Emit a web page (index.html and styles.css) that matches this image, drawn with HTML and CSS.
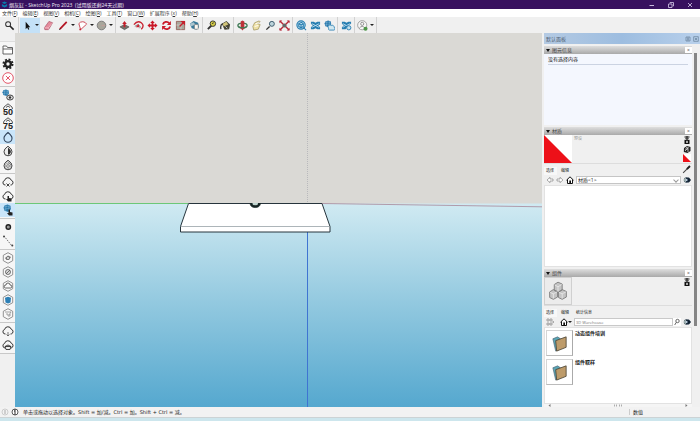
FILE: index.html
```html
<!DOCTYPE html>
<html lang="zh-CN">
<head>
<meta charset="utf-8">
<title>烟灰缸 - SketchUp Pro 2023</title>
<link rel="stylesheet" href="styles.css">
</head>
<body>
<svg class="defs" aria-hidden="true">
  <symbol id="hex" viewBox="0 0 12 12"><path d="M6 .7 10.7 3.3v5.4L6 11.3 1.3 8.700V3.300Z" fill="#f8f8f8" stroke="#777" stroke-width=".8"/></symbol>
  <symbol id="cloud" viewBox="0 0 12 12"><path d="M3.500 9H3A2.300 2.300 0 0 1 2.600 4.500 3.400 3.400 0 0 1 9.200 4.200 2.500 2.500 0 0 1 9.200 9H8.500" fill="none" stroke="#333" stroke-width="1"/></symbol>
  <symbol id="home" viewBox="0 0 8 8"><path d="M.5 4.200 4 .8 7.500 4.200M1.500 3.500V7.500H6.500V3.500" fill="#fff" stroke="#111" stroke-width="1"/><path d="M3.300 4.500H5V7.500H3.300Z" fill="#111"/></symbol>
  <symbol id="detail" viewBox="0 0 8 8"><circle cx="3.700" cy="4" r="2.800" fill="#234"/><path d="M.8 3 3 1.500V6.500L.8 5Z" fill="#9aa"/><path d="M4 2.500H5.500V1L8 4 5.500 7V5.500H4Z" fill="#123"/><circle cx="3.600" cy="4" r="1" fill="#cde"/></symbol>
  <symbol id="pin" viewBox="0 0 8 8"><path d="M1.500 1H6.500M4 0V3.500M2.500 2 4 3.500 5.500 2" stroke="#111" stroke-width="1" fill="none"/><path d="M1.500 3.800H6.500V8H1.500Z" fill="#111"/><path d="M4 4.700V7M3 6H5" stroke="#fff" stroke-width=".8"/></symbol>
  <symbol id="folder" viewBox="0 0 20 20"><path d="M3 5 8 3 11 5 10 16 6 18Z" fill="#5aa6b5" stroke="#456" stroke-width=".6"/><path d="M6 7 17 3V14L7 18Z" fill="#bd9b6a" stroke="#4d4637" stroke-width=".9"/></symbol>
  <symbol id="globe" viewBox="0 0 12 12"><path d="M2 2 6 .8 10 2.300 10.500 7 7 10.500 2 9 .8 5Z" fill="#2878ad"/><path d="M1.500 4 6 3 10 4.500M1.500 7 6 6 10 7M4 1.500 3.500 9.500M8 1.500 7.500 10" stroke="#9fcbe2" stroke-width=".5" fill="none"/></symbol>
</svg>

<header class="titlebar">
  <svg class="logo" viewBox="0 0 8 8"><path d="M1 2 4 .5 7 2 4 3.500ZM1 3.500 4 5 7 3.500V6L4 7.500 1 6Z" fill="#087aae"/></svg>
  <h1>烟灰缸 - SketchUp Pro 2023 &nbsp;(试用版还剩24天过期)</h1>
  <div class="wincontrols">
    <button aria-label="最小化"><svg viewBox="0 0 8 8"><path d="M1.500 4.500H6" stroke="#c7b9dc"/></svg></button>
    <button aria-label="还原"><svg viewBox="0 0 8 8"><path d="M1.500 3H5V6.500H1.500ZM3 2.500V1.500H6.500V5H5.500" fill="none" stroke="#c7b9dc" stroke-width=".9"/></svg></button>
    <button aria-label="关闭"><svg viewBox="0 0 8 8"><path d="M2 2 6 6M6 2 2 6" stroke="#c7b9dc" stroke-width=".9"/></svg></button>
  </div>
</header>

<nav class="menubar">
  <button>文件(<u>F</u>)</button><button>编辑(<u>E</u>)</button><button>视图(<u>V</u>)</button><button>相机(<u>C</u>)</button><button>绘图(<u>R</u>)</button><button>工具(<u>T</u>)</button><button>窗口(<u>W</u>)</button><button>扩展程序 (<u>x</u>)</button><button>帮助(<u>H</u>)</button>
</nav>

<div class="toolbar">
  <div class="set first">
    <button aria-label="搜索"><svg viewBox="0 0 12 12"><circle cx="4.500" cy="4.500" r="2.700" fill="#eee" stroke="#333" stroke-width="1.100"/><path d="M6.500 6.500 10.500 10.500" stroke="#222" stroke-width="1.700"/></svg></button>
  </div>
  <div class="set draw">
    <button class="drop on" aria-label="选择"><svg viewBox="0 0 12 12"><path d="M4 2V10L5.700 8.300 6.800 10.700 8 10.100 6.900 7.800H9Z" fill="#111"/></svg><i></i></button>
    <button class="eraser" aria-label="橡皮擦"><svg viewBox="0 0 12 12"><path d="M1.500 8.500 6.500 1.500 10.500 3 6 10.500 2 10.500Z" fill="#e58b9b" stroke="#a24d60" stroke-width=".7"/><path d="M1.500 8.500 5.800 8.500 10.500 3M5.800 8.500V10.500" fill="none" stroke="#fbd1d9" stroke-width=".6"/></svg></button>
    <button class="drop" aria-label="直线"><svg viewBox="0 0 12 12"><path d="M2 10 9.500 2" stroke="#b51624" stroke-width="1.900"/><path d="M1.300 10.700 2.800 9.200" stroke="#222"/></svg><i></i></button>
    <button class="drop" aria-label="圆弧"><svg viewBox="0 0 12 12"><path d="M2 4A5 5 0 0 1 10.500 4.500L4 10.500Z" fill="#fff" stroke="#cb4150"/><circle cx="3.500" cy="10.300" r="1" fill="#c23"/></svg><i></i></button>
    <button class="drop" aria-label="圆"><svg viewBox="0 0 12 12"><circle cx="6" cy="6" r="4.700" fill="#a8a69c" stroke="#777"/><path d="M6 6H10" stroke="#c99" stroke-width=".7"/></svg><i></i></button>
  </div>
  <div class="set">
    <button aria-label="推/拉"><svg viewBox="0 0 12 12"><path d="M1 7.500 6 5 11 7.500 6 10.500Z" fill="#74756e" stroke="#444" stroke-width=".6"/><path d="M6 1 8.500 4.300H7V8H5V4.300H3.500Z" fill="#c51f2b"/></svg></button>
    <button aria-label="偏移"><svg viewBox="0 0 12 12"><path d="M1 5Q5 0 9 3T9 10" fill="none" stroke="#c92432" stroke-width="1.500"/><path d="M2 7Q5 4 7 6T7 9" fill="none" stroke="#777"/><path d="M3 8 6 4 7 8Z" fill="#c92432"/></svg></button>
    <button aria-label="移动"><svg viewBox="0 0 12 12"><path d="M6 .5 8.500 3.200H7V5H8.800V3.500L11.500 6 8.800 8.500V7H7V8.800H8.500L6 11.500 3.500 8.800H5V7H3.200V8.500L.5 6 3.200 3.500V5H5V3.200H3.500Z" fill="#ca1828"/></svg></button>
    <button aria-label="旋转"><svg viewBox="0 0 12 12"><path d="M2 5A4 4 0 0 1 9 3.500M10 7A4 4 0 0 1 3 8.500" fill="none" stroke="#ca1828" stroke-width="1.900"/><path d="M10.800 1V5.500H6.500ZM1.200 11V6.500H5.500Z" fill="#ca1828"/></svg></button>
    <button aria-label="缩放"><svg viewBox="0 0 12 12"><path d="M1.500 1.500H10.500V10.500H1.500Z" fill="#aaa79c" stroke="#8a4c46" stroke-width=".8"/><path d="M1.500 5.500H6.500V10.500" fill="none" stroke="#ddd" stroke-width=".7"/><path d="M5 7 9 3" stroke="#c51f2b" stroke-width="1.500"/><path d="M6 1H11V6Z" fill="#c51f2b"/></svg></button>
    <button aria-label="路径跟随"><svg viewBox="0 0 12 12"><path d="M1 4 5 1 10 3 11 8 8 10.500 3 9Z" fill="#397999"/><path d="M1 4 5 2.500 7 5 2 7Z" fill="#aac4cf"/><path d="M6 5H10V10H6Z" fill="#faf7f2" stroke="#777" stroke-width=".6"/></svg></button>
  </div>
  <div class="set">
    <button aria-label="卷尺"><svg viewBox="0 0 12 12"><path d="M2 10 6 6" stroke="#333" stroke-width="2"/><circle cx="7.500" cy="4" r="3" fill="#d4cb43" stroke="#333"/><path d="M6.500 4 8.500 3" stroke="#333"/></svg></button>
    <button aria-label="颜料桶"><svg viewBox="0 0 12 12"><path d="M2 4 7 1 11 5 10 10 5 10.500Z" fill="#474536"/><path d="M3 4 7 2 9 5 4 7Z" fill="#d3c67a"/><path d="M1 10Q0 5 3 4" fill="none" stroke="#333" stroke-width="1.400"/><path d="M6 7 8 9" stroke="#ddd"/></svg></button>
  </div>
  <div class="set">
    <button aria-label="环绕观察"><svg viewBox="0 0 12 12"><ellipse cx="6" cy="6" rx="5" ry="2.600" fill="none" stroke="#417a55" stroke-width="1.500"/><path d="M4 1.500 6 .5 8 1.500V9L6 11.500 4 9Z" fill="#bf3038"/><path d="M1.500 7Q6 10 10.500 7" fill="none" stroke="#417a55" stroke-width="1.300"/></svg></button>
    <button aria-label="平移"><svg viewBox="0 0 12 12"><path d="M2 7 4 3 9 1 10 2 7 4 10 5 8 10 3 11Z" fill="#eee0a5" stroke="#a0945f" stroke-width=".8"/><path d="M4 7 8 6M5 4 9 3" stroke="#fff"/></svg></button>
    <button aria-label="缩放视图"><svg viewBox="0 0 12 12"><path d="M1.500 10.500 5 7" stroke="#333" stroke-width="1.500"/><circle cx="7.500" cy="4.200" r="2.700" fill="#bcd3db" stroke="#345366"/></svg></button>
    <button aria-label="充满视窗"><svg viewBox="0 0 12 12"><path d="M1 1 11 11M11 1 1 11" stroke="#b82838" stroke-width="1.500"/><circle cx="6" cy="6" r="2.200" fill="#666"/><path d="M.5.5H3.500L.5 3.500ZM11.500.5V3.500L8.500 .5ZM.5 11.500V8.500L3.500 11.500ZM11.500 11.500H8.500L11.500 8.500Z" fill="#b82838"/></svg></button>
  </div>
  <div class="set">
    <button aria-label="3D Warehouse"><svg viewBox="0 0 12 12"><circle cx="5.500" cy="5.500" r="4.500" fill="#c7e3ef" stroke="#287eb1" stroke-width="1.300"/><path d="M3 4 6 2.500 8 4V7L5.500 8.500 3 7ZM3 4 5.500 5.500 8 4M5.500 5.500V8.500M8 8 11 11" fill="none" stroke="#287eb1" stroke-width="1.100"/></svg></button>
    <button aria-label="分享模型"><svg viewBox="0 0 12 12"><path d="M1 2H4L6 3 8 2H11V5L9 6 11 8V10H8L6 9 4 10H1V8L3 6 1 4Z" fill="#287eb1"/><path d="M2 4 6 6 10 4M2 8 6 6 10 8" fill="none" stroke="#d8f0fb" stroke-width=".8"/></svg></button>
    <button aria-label="分享组件"><svg viewBox="0 0 12 12"><use href="#globe" width="9" height="9"/><path d="M5 9A2 2 0 0 1 8 6 2 2 0 0 1 11 8 1.500 1.500 0 0 1 10 11H6A1.500 1.500 0 0 1 5 9" fill="#d0e7f0" stroke="#287eb1" stroke-width=".9"/></svg></button>
  </div>
  <div class="set">
    <button aria-label="扩展程序"><svg viewBox="0 0 12 12"><path d="M1 2H4L6 3 8 2H11V4L8 6 5 10H1V8L3 6 1 4Z" fill="#287eb1"/><path d="M2 4 6 6 10 4M2 8 5 6" fill="none" stroke="#d8f0fb" stroke-width=".8"/><circle cx="8.500" cy="8.500" r="2.300" fill="#c5e1ed" stroke="#287eb1"/></svg></button>
  </div>
  <div class="set">
    <button class="drop" aria-label="账户"><svg viewBox="0 0 12 12"><circle cx="5.700" cy="5.700" r="5" fill="#f6f6f6" stroke="#888" stroke-width=".8"/><circle cx="5.700" cy="4.200" r="1.700" fill="none" stroke="#777" stroke-width=".8"/><path d="M2.500 9Q5.500 5 9 9" fill="none" stroke="#777" stroke-width=".8"/><circle cx="9.300" cy="9.500" r="2.200" fill="#4d9647"/></svg><i></i></button>
  </div>
</div>

<main class="workspace">
  <aside class="sidebar">
    <div class="grip"></div>
    <div class="group">
      <button aria-label="打开"><svg viewBox="0 0 12 12"><path d="M1 10V2H4.500L5.500 3.500H10.500V10ZM1 5H11" fill="#fff" stroke="#555" stroke-width=".9"/></svg></button>
      <button aria-label="设置"><svg viewBox="0 0 12 12"><circle cx="6" cy="6" r="4.600" fill="none" stroke="#222" stroke-width="1.800" stroke-dasharray="2 1.610"/><circle cx="6" cy="6" r="2.900" fill="none" stroke="#222" stroke-width="2.400"/></svg></button>
      <button aria-label="关闭图层"><svg viewBox="0 0 12 12"><circle cx="6" cy="6" r="5.300" fill="#fff" stroke="#e04358" stroke-width=".9"/><path d="M3.900 3.900 8.100 8.100M8.100 3.900 3.900 8.100" stroke="#e04358" stroke-width=".9"/></svg></button>
    </div>
    <div class="group">
      <button aria-label="可见性"><svg viewBox="0 0 12 12"><use href="#globe" width="8" height="8"/><ellipse cx="8" cy="8.500" rx="3.300" ry="2.500" fill="#ddd" stroke="#444"/><circle cx="8" cy="8.500" r="1.200" fill="#333"/></svg></button>
      <button aria-label="50%"><svg viewBox="0 0 12 12"><path d="M1.500 6 2 4 6 .8 10 4 10.500 6M4 4.500 6 3 8 4.500" fill="none" stroke="#444" stroke-width=".9"/><text x="6" y="12" class="pct">50</text></svg></button>
      <button aria-label="75%"><svg viewBox="0 0 12 12"><path d="M1.500 6 2 4 6 .8 10 4 10.500 6M4 4.500 6 3 8 4.500" fill="none" stroke="#444" stroke-width=".9"/><text x="6" y="12" class="pct">75</text></svg></button>
      <button class="on" aria-label="透明"><svg viewBox="0 0 12 12"><path d="M6 1.500Q10.200 5 10 7.200A4 4 0 0 1 2 7.200Q1.800 5 6 1.500Z" fill="none" stroke="#31445c" stroke-width="1.100"/></svg></button>
      <button aria-label="半透明"><svg viewBox="0 0 12 12"><path d="M6 1.200Q10.200 4 10 6.800A4 4 0 0 1 2 6.800Q1.800 4 6 1.200Z" fill="#eee" stroke="#333" stroke-width=".9"/><path d="M6 2.500Q9 5 9 7Q8 9.500 6 9.700Z" fill="#333"/></svg></button>
      <button aria-label="纹理"><svg viewBox="0 0 12 12"><path d="M6 1.200Q10.200 4 10 6.800A4 4 0 0 1 2 6.800Q1.800 4 6 1.200Z" fill="#ddd" stroke="#333" stroke-width=".9"/><path d="M2.500 5 7 9.800M4 3.500 9 8.500M5.500 2.500 9.500 6.500M3 8.500 8 3.500M5 9.500 9.500 5" stroke="#666" stroke-width=".6"/></svg></button>
    </div>
    <div class="group">
      <button aria-label="断开云端"><svg viewBox="0 0 12 12"><use href="#cloud"/><path d="M4.500 7.500 7.500 10.500M7.500 7.500 4.500 10.500" stroke="#444"/></svg></button>
      <button aria-label="云端选择"><svg viewBox="0 0 12 12"><use href="#cloud"/><path d="M5.500 6H7V8L9.500 8.500V11.500H6L4 9H5.500Z" fill="#222"/></svg></button>
      <button class="on" aria-label="模型选择"><svg viewBox="0 0 12 12"><use href="#globe" width="9" height="9" x="1"/><path d="M6.500 5.500H8V8L10.500 8.500V11.500H7L5 9H6.500Z" fill="#222"/></svg></button>
    </div>
    <div class="group">
      <button aria-label="点"><svg viewBox="0 0 12 12"><circle cx="6.300" cy="6" r="2.200" fill="#999" stroke="#222" stroke-width="1.400"/></svg></button>
      <button aria-label="构造线"><svg viewBox="0 0 12 12"><path d="M2 1 10 11" stroke="#555" stroke-width=".8" stroke-dasharray="1.500 1"/><circle cx="2" cy="1.500" r="1" fill="#444"/><circle cx="10.300" cy="10.500" r="1" fill="#444"/></svg></button>
    </div>
    <div class="group">
      <button aria-label="视图一"><svg viewBox="0 0 12 12"><use href="#hex"/><path d="M3 6 6 3.500 9 5 7 8 4.500 8Z" fill="#777"/><circle cx="6" cy="6" r="1" fill="#eee"/></svg></button>
      <button aria-label="视图二"><svg viewBox="0 0 12 12"><use href="#hex"/><circle cx="6" cy="6" r="2.500" fill="#ddd" stroke="#555" stroke-width=".8"/><path d="M4 8 8 4" stroke="#555" stroke-width=".8"/></svg></button>
      <button aria-label="云视图"><svg viewBox="0 0 12 12"><use href="#hex"/><path d="M3.500 8A1.500 1.500 0 0 1 4 5 2 2 0 0 1 8 5 1.500 1.500 0 0 1 8.500 8Z" fill="none" stroke="#555" stroke-width=".9"/></svg></button>
      <button aria-label="实体视图"><svg viewBox="0 0 12 12"><use href="#hex"/><path d="M3 3.800 6 2.800 9 3.800 8.500 8.500 6 9.500 3.500 8.500Z" fill="#2d80b6"/></svg></button>
      <button aria-label="线框视图"><svg viewBox="0 0 12 12"><use href="#hex"/><path d="M3 4H9L7 7V9M5 5V7H9" fill="none" stroke="#999" stroke-width=".9"/></svg></button>
    </div>
    <div class="group">
      <button aria-label="云上传"><svg viewBox="0 0 12 12"><use href="#cloud"/><path d="M6 7V11M4.500 9.500 6 11 7.500 9.500" fill="none" stroke="#555" stroke-width=".8"/></svg></button>
      <button aria-label="云同步"><svg viewBox="0 0 12 12"><use href="#cloud"/><path d="M3 7.500H9M4 10.500H8L9 7.500 6 6 3 7.500Z" fill="#eee" stroke="#333" stroke-width=".9"/></svg></button>
    </div>
  </aside>

  <section class="viewport" aria-label="模型视图">
    <svg viewBox="0 0 527 374" preserveAspectRatio="xMidYMid slice">
      <defs>
        <linearGradient id="ground" x1="0" y1="0" x2="0" y2="1"><stop offset="0" stop-color="#d0eaf2"/><stop offset=".5" stop-color="#91c8df"/><stop offset="1" stop-color="#55a8cf"/></linearGradient>
      </defs>
      <rect width="527" height="374" fill="#dad9d5"/>
      <rect y="170.500" width="527" height="203.500" fill="url(#ground)"/>
      <path d="M292.500 0V170" stroke="#aaaab2" stroke-width=".7" stroke-dasharray="1 1"/>
      <path d="M0 170.500H173" stroke="#6cc878"/>
      <path d="M307 170.500 527 173.800" stroke="#a88798" stroke-width=".8"/>
      <path d="M292.500 199V374" stroke="#3f74d2"/>
      <path d="M173.500 170.500H307L315 193.500V199H165.500V193.500Z" fill="#fff" stroke="#26343c" stroke-width="1"/>
      <path d="M166 193.500H315" stroke="#8a959b" stroke-width=".7"/>
      <path d="M235 170.500A5.300 4.700 0 0 0 245.500 170.500H243.500A3.300 2.500 0 0 1 237 170.500Z" fill="#172524" stroke="#172524" stroke-width=".7"/>
      <path d="M237.500 170H243A2.700 2 0 0 1 237.500 170" fill="#bfd5cf"/>
    </svg>
  </section>

  <aside class="tray">
    <div class="trayhead"><h2>默认面板</h2>
      <button aria-label="固定"><svg viewBox="0 0 6 6"><path d="M1 1H5V5H1ZM2 3H4M3 1V5" fill="none" stroke="#667f99" stroke-width=".7"/></svg></button>
      <button aria-label="关闭面板"><svg viewBox="0 0 6 6"><path d="M.7.700H5.300V5.300H.7ZM2 2 4 4M4 2 2 4" fill="none" stroke="#667f99" stroke-width=".7"/></svg></button>
    </div>
    <div class="traybody">
      <div class="panels">
        <section class="panel entity">
          <h3>图元信息<button aria-label="关闭图元信息">×</button></h3>
          <div class="info"><p>没有选择内容</p></div>
        </section>
        <section class="panel">
          <h3>材质<button aria-label="关闭材质">×</button></h3>
          <div class="preview">
            <svg class="swatch" viewBox="0 0 28 28"><path d="M0 0H28V28Z" fill="#fff"/><path d="M0 0 28 28H0Z" fill="#ed1018"/></svg>
            <span class="name">预设</span>
            <div class="side">
              <svg viewBox="0 0 8 8"><use href="#pin"/></svg>
              <svg viewBox="0 0 8 8"><path d="M1 3 4 1 7.500 2V6L4.500 8 .8 7Z" fill="#222"/><path d="M2 4H5V7M3 2.500 6 3M2 6 5 3" stroke="#eee" stroke-width=".7" fill="none"/></svg>
              <svg viewBox="0 0 8 8"><path d="M0 0H8V8Z" fill="#fff"/><path d="M0 0 8 8H0Z" fill="#ed1018"/></svg>
            </div>
          </div>
          <div class="tabs"><button class="active">选择</button><button>编辑</button><svg class="dropper" viewBox="0 0 8 8"><path d="M1 7 5 3" stroke="#444"/><path d="M4.500 3 6.500 1 7 1.500 5 3.500Z" fill="#222" stroke="#222"/></svg></div>
          <div class="controls">
            <button aria-label="后退"><svg viewBox="0 0 8 8"><path d="M1 4 4 1.300V3H7V5H4V6.700Z" fill="#fff" stroke="#888" stroke-width=".7"/></svg></button>
            <button aria-label="前进"><svg viewBox="0 0 8 8"><path d="M7 4 4 1.300V3H1V5H4V6.700Z" fill="#fff" stroke="#888" stroke-width=".7"/></svg></button>
            <button aria-label="模型材质"><svg><use href="#home"/></svg></button>
            <span class="selectbox"><select aria-label="材质集"><option>材质&lt;1&gt;</option></select></span>
            <button aria-label="详细信息"><svg><use href="#detail"/></svg></button>
          </div>
          <div class="list materials"></div>
        </section>
        <section class="panel components">
          <h3>组件<button aria-label="关闭组件">×</button></h3>
          <div class="preview">
            <div class="thumb"><svg viewBox="0 0 28 28"><path d="M10 7 14 4.500 18.500 6.500V13L14 15.500 10 13.500ZM5 15 9 12.500 13.500 14.500V20.500L9 23 5 21ZM14.500 15 18.500 12.500 23 14.500V20.500L18.500 23 14.500 21Z" fill="#c4c4c4" stroke="#808080" stroke-width="1"/><path d="M10.500 7.500 14 9.500 18 7M14 9.500V15M5.500 15.500 9 17 13 15M9 17V22M15 15.500 18.500 17 22.500 15M18.500 17V22" fill="none" stroke="#eee" stroke-width=".8"/></svg></div>
            <div class="side"><svg viewBox="0 0 8 8"><use href="#pin"/></svg></div>
          </div>
          <div class="tabs"><button class="active">选择</button><button>编辑</button><button>统计信息</button></div>
          <div class="controls">
            <button class="view" aria-label="视图选项"><svg viewBox="0 0 8 8"><path d="M1 1H3V3H1ZM4 1H6V3H4ZM1 5H3V7H1ZM4 5H6V7H4Z" fill="none" stroke="#888" stroke-width=".7"/><path d="M6.500 4H8" stroke="#666"/></svg></button>
            <button class="homedrop" aria-label="模型中"><svg><use href="#home"/></svg><i></i></button>
            <input type="search" aria-label="搜索组件" placeholder="3D Warehouse">
            <button class="find" aria-label="搜索"><svg viewBox="0 0 8 8"><circle cx="4.500" cy="3" r="1.700" fill="none" stroke="#444" stroke-width=".8"/><path d="M3.300 4.300 1.700 7" stroke="#444" stroke-width=".8"/></svg></button>
            <button aria-label="组件详细信息"><svg><use href="#detail"/></svg></button>
          </div>
          <ul class="list items">
            <li><span><svg><use href="#folder"/></svg></span><b>动态组件培训</b></li>
            <li><span><svg><use href="#folder"/></svg></span><b>组件取样</b></li>
          </ul>
          <div class="hscroll">
            <svg viewBox="0 0 3 3"><path d="M2.500 0V3L.5 1.500Z" fill="#777"/></svg>
            <svg class="ticks" viewBox="0 0 9 3"><path d="M.5.500V2.500M2.500.500V2.500M5.500.500V2.500M7.500.500V2.500" stroke="#999" stroke-width=".8"/></svg>
            <svg viewBox="0 0 3 3"><path d="M.5 0V3L2.500 1.500Z" fill="#777"/></svg>
          </div>
        </section>
      </div>
      <div class="vscroll"><div></div></div>
    </div>
  </aside>
</main>

<footer class="status">
  <svg viewBox="0 0 8 8"><circle cx="4" cy="4" r="3" fill="none" stroke="#bbb" stroke-width=".7"/><path d="M4 2V6" stroke="#aaa"/></svg>
  <svg viewBox="0 0 8 8"><circle cx="4" cy="4" r="3" fill="#fff" stroke="#333" stroke-width=".8"/><path d="M4 1V7M3 3H4" stroke="#333"/></svg>
  <p>单击或拖动以选择对象。Shift = 加/减。Ctrl = 加。Shift + Ctrl = 减。</p>
  <label for="measure">数值</label><input id="measure" type="text">
</footer>
<div class="taskbar"></div>
</body>
</html>
```

FILE: styles.css
```css
* { box-sizing: border-box; }
body {
  margin: 0;
  height: 100vh;
  display: flex;
  flex-direction: column;
  overflow: hidden;
  background: #f0f0f0;
  color: #222;
  font: 5px/6px "Open Sans", "Noto Sans CJK SC", sans-serif;
}
button, input, select {
  margin: 0;
  padding: 0;
  border: 0;
  background: none;
  color: inherit;
  font: inherit;
}
h1, h2, h3, p, ul { margin: 0; padding: 0; font: inherit; list-style: none; }
svg { display: block; flex: none; }
.defs { position: absolute; width: 0; height: 0; }

.titlebar {
  flex: none;
  height: 9px;
  display: flex;
  align-items: center;
  gap: 1px;
  padding-left: 1px;
  background: #38115f;
  color: #f2edf8;
}
.logo { width: 7px; height: 7px; }
.wincontrols { margin-left: auto; display: flex; gap: 11px; padding-right: 6px; }
.wincontrols svg { width: 8px; height: 8px; }

.menubar {
  flex: none;
  height: 8px;
  display: flex;
  align-items: center;
  gap: 5px;
  padding-left: 2px;
  background: #fff;
  color: #333;
}
.menubar button { white-space: nowrap; }

.toolbar { flex: none; height: 16px; display: flex; background: #f0f0f0; }
.set {
  display: flex;
  align-items: center;
  padding: 0 1px;
  border-right: 1px solid #d2d2d2;
}
.set.first { padding: 0 2px; }
.set button { width: 14px; height: 15px; display: flex; align-items: center; justify-content: center; }
.set svg { width: 11px; height: 11px; }
.set .drop { width: 19px; gap: 2px; }
.set .drop.on { width: 20px; background: #c4e1f7; }
.set .eraser { width: 17px; }
.set i, .homedrop i {
  border: 2px solid transparent;
  border-top-color: #222;
  border-bottom: 0;
}

.workspace { flex: 1; min-height: 0; display: flex; }
.sidebar { flex: none; width: 15px; background: #f0f0f0; }
.grip { height: 9px; border-bottom: 1px solid #ddd; }
.group { padding: 1px 0; border-bottom: 1px solid #c8c8c8; background: #f6f6f6; }
.group button { width: 100%; height: 14px; display: flex; align-items: center; justify-content: center; }
.group .on { background: #c9e5fa; }
.group svg { width: 12px; height: 12px; overflow: visible; }
.pct { font: bold 9px "Liberation Sans", sans-serif; text-anchor: middle; fill: #222; }

.viewport { flex: 1; min-width: 0; background: #dad9d5; }
.viewport svg { width: 100%; height: 100%; }

.tray { flex: none; width: 158px; padding-left: 2px; display: flex; flex-direction: column; }
.trayhead {
  flex: none;
  height: 11px;
  display: flex;
  align-items: center;
  gap: 2px;
  padding: 0 1px 0 2px;
  background: linear-gradient(90deg, #b4cae3, #9dbde0 50%, #b8d0eb);
  color: #506070;
}
.trayhead h2 { flex: 1; }
.trayhead svg { width: 6px; height: 6px; }
.traybody { flex: 1; min-height: 0; display: flex; padding-top: 2px; }
.panels { flex: 1; min-width: 0; display: flex; flex-direction: column; gap: 2px; }
.panel h3 {
  height: 8px;
  display: flex;
  align-items: center;
  gap: 2px;
  padding-left: 2px;
  background: linear-gradient(#dedede, #a9a9a9);
  color: #444;
}
.panel h3::before { content: ""; border: 2px solid transparent; border-top: 3px solid #111; border-bottom: 0; }
.panel h3 button { width: 7px; height: 6px; margin-left: auto; background: #fff; line-height: 6px; }
.info { height: 71px; padding: 2px 4px; background: #f4f7fe; color: #111; }
.info p { padding-bottom: 2px; border-bottom: 1px solid #cbd3e2; }
.preview { display: flex; height: 29px; gap: 2px; border-bottom: 1px solid #ddd; }
.swatch { width: 28px; height: 28px; }
.name { padding-top: 1px; color: #999; font-size: 4px; }
.side { margin-left: auto; padding: 1px 1px 0 0; display: flex; flex-direction: column; align-items: center; gap: 1px; }
.side svg { width: 8px; height: 8px; }
.tabs { height: 11px; display: flex; align-items: flex-end; gap: 1px; font-size: 4px; }
.tabs button { padding: 0 3px; height: 8px; }
.tabs button.active { background: #f8f8f8; padding: 0 3px 0 2px; }
.dropper { width: 9px; height: 9px; margin: 0 1px 1px auto; }
.controls { height: 10px; display: flex; align-items: center; gap: 2px; padding: 0 1px 0 2px; }
.controls svg { width: 8px; height: 8px; }
.selectbox { flex: 1; position: relative; height: 8px; background: #fff; border: 1px solid #c5c5c5; }
.selectbox::after {
  content: "";
  position: absolute;
  top: 1px;
  right: 2px;
  width: 3px;
  height: 3px;
  border: solid #999;
  border-width: 0 1px 1px 0;
  transform: rotate(45deg);
}
.selectbox select { appearance: none; display: block; width: 100%; height: 6px; padding-left: 1px; line-height: 6px; }
.list { background: #fff; border: 1px solid #e2e2e2; }
.materials { height: 82px; }
.components { flex: 1; min-height: 0; display: flex; flex-direction: column; }
.components > * { flex: none; }
.thumb { width: 28px; height: 28px; border: 1px solid #d0d0d0; background: #ececec; }
.thumb svg { width: 26px; height: 26px; }
.view { margin-right: 4px; }
.homedrop { display: flex; align-items: center; gap: 0; }
.controls input { flex: 1; min-width: 0; height: 8px; padding: 0 1px; border: 1px solid #c9c9c9; background: #fff; font-size: 4px; appearance: none; }
.controls input::placeholder { color: #777; }
.find { margin-left: -2px; background: #fff; }
.components > .items { flex: 1; min-height: 0; padding: 2px 1px; display: flex; flex-direction: column; gap: 3px; overflow: hidden; }
.items li { display: flex; gap: 2px; color: #111; }
.items span { width: 27px; height: 26px; padding: 3px; border: 1px solid #d5d5d5; border-right-color: #aaa; border-bottom-color: #bbb; }
.items svg { width: 19px; height: 19px; }
.items b { font-size: 5px; }
.hscroll { height: 3px; display: flex; justify-content: space-between; padding: 0 4px; background: #f5f5f5; }
.hscroll svg { width: 3px; height: 3px; }
.hscroll .ticks { width: 9px; }
.vscroll { width: 8px; padding: 7px 3px 0 2px; }
.vscroll div { height: 77%; background: #858585; }

.status { flex: none; height: 11px; display: flex; align-items: center; gap: 2px; padding-left: 1px; border-bottom: 1px solid #ccd3d5; background: #f2f2f2; font-family: "DejaVu Sans", "Noto Sans CJK SC", sans-serif; }
.status svg { width: 8px; height: 8px; }
.status p { flex: 1; margin-left: 2px; }
.status label { padding-left: 3px; border-left: 1px solid #ccc; }
.status input { width: 55px; height: 8px; }
.taskbar { flex: none; height: 3px; background: #cde6ed; }
```
